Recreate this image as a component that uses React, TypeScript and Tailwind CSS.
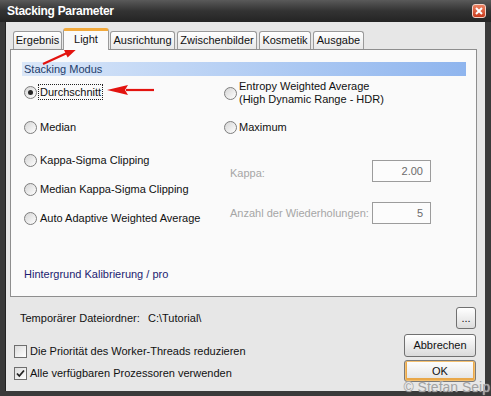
import React from "react";

const tabs = [
  { label: "Ergebnis", cls: "ml-[7px] w-[49px]" },
  { label: "Light", cls: "ml-[1px] w-[46px]", selected: true },
  { label: "Ausrichtung", cls: "ml-[1px] w-[65px]" },
  { label: "Zwischenbilder", cls: "ml-[2px] w-[80px]" },
  { label: "Kosmetik", cls: "ml-[2px] w-[52px]" },
  { label: "Ausgabe", cls: "ml-[2px] w-[51px]" },
];

function Radio({ checked = false }: { checked?: boolean }) {
  return (
    <span className="w-[13px] h-[13px] shrink-0 rounded-full border border-[#7d7d7d] bg-linear-to-br from-[#d5d5d5] to-white flex items-center justify-center">
      {checked && <span className="w-[5px] h-[5px] rounded-full bg-[#262626]" />}
    </span>
  );
}

function Checkbox({ checked = false }: { checked?: boolean }) {
  return (
    <span className="w-[13px] h-[13px] shrink-0 border border-[#6e6e6e] bg-linear-to-br from-[#dcdcdc] to-white flex items-center justify-center">
      {checked && (
        <svg width="11" height="11" viewBox="0 0 11 11">
          <path d="M2 5.5 L4.3 8 L9 2.5" fill="none" stroke="#222" strokeWidth="1.8" />
        </svg>
      )}
    </span>
  );
}

function NumberField({ value }: { value: string }) {
  return (
    <div className="w-[59px] h-[22px] border border-[#9c9c9c] bg-[#fcfcfc] flex items-center justify-end pr-[7px] text-[#6b6b6b]">
      {value}
    </div>
  );
}

export default function App() {
  return (
    <div className="relative w-[491px] h-[396px] overflow-hidden bg-[#3a3a3a] font-['Liberation_Sans',Arial,sans-serif] text-[11px] text-[#111]">
      {/* Titelleiste */}
      <div className="h-[22px] flex items-center justify-between pl-[7px] pr-[5px] bg-linear-to-b from-[#5a5a5a] via-[#333] to-[#242424]">
        <span className="text-white font-bold text-[12px] tracking-[-0.3px]">Stacking Parameter</span>
        <span className="w-[14px] h-[14px] rounded-[3px] border border-[#f3d3c8] bg-linear-to-b from-[#ec8262] to-[#c9381a] flex items-center justify-center">
          <svg width="8" height="8" viewBox="0 0 8 8">
            <path d="M1 1 L7 7 M7 1 L1 7" stroke="white" strokeWidth="2" />
          </svg>
        </span>
      </div>

      <div className="ml-[5px] mr-[6px] h-[369px] bg-[#e7e7e7] border-l border-[#222]">
        {/* Reiter */}
        <div className="h-[27px] flex items-end">
          {tabs.map((t) =>
            t.selected ? (
              <div
                key={t.label}
                className={`${t.cls} relative z-10 -mb-px h-[22px] border-x border-[#9a9a9a] border-t-[3px] border-t-[#f2a93b] rounded-t-[3px] bg-[#fafafa] flex items-center justify-center pb-[3px]`}
              >
                {t.label}
              </div>
            ) : (
              <div
                key={t.label}
                className={`${t.cls} h-[18px] border border-b-0 border-[#9a9a9a] rounded-t-[3px] bg-linear-to-b from-white to-[#e8e8e8] flex items-center justify-center`}
              >
                {t.label}
              </div>
            )
          )}
        </div>

        {/* Panel */}
        <div className="ml-[4px] w-[467px] h-[248px] border border-[#8e8e8e] bg-[#fafafa]">
          <div className="ml-[11px] mt-[12px] w-[444px] h-[14px] bg-linear-to-r from-[#dae7f8] to-[#8fb5ee] pl-[2px] flex items-center text-[#233d6b]">
            Stacking Modus
          </div>

          <div className="flex pl-[13px]">
            {/* linke Spalte */}
            <div className="w-[200px] flex flex-col">
              <div className="mt-[8px] h-[16px] flex items-center">
                <Radio checked />
                <span className="ml-[1px] px-[1px] border border-dotted border-[#222] leading-[14px]">Durchschnitt</span>
              </div>
              <div className="mt-[19px] h-[16px] flex items-center gap-[3px]">
                <Radio />
                <span>Median</span>
              </div>
              <div className="mt-[17px] h-[16px] flex items-center gap-[3px]">
                <Radio />
                <span>Kappa-Sigma Clipping</span>
              </div>
              <div className="mt-[13px] h-[16px] flex items-center gap-[3px]">
                <Radio />
                <span>Median Kappa-Sigma Clipping</span>
              </div>
              <div className="mt-[13px] h-[16px] flex items-center gap-[3px]">
                <Radio />
                <span>Auto Adaptive Weighted Average</span>
              </div>
              <div className="mt-[40px] h-[16px] flex items-center text-[#1c1c70]">
                Hintergrund Kalibrierung / pro
              </div>
            </div>

            {/* rechte Spalte */}
            <div className="w-[207px] flex flex-col">
              <div className="mt-[4px] h-[26px] flex items-center gap-[2px]">
                <Radio />
                <span className="leading-[13px]">
                  Entropy Weighted Average
                  <br />
                  (High Dynamic Range - HDR)
                </span>
              </div>
              <div className="mt-[13px] h-[16px] flex items-center gap-[2px]">
                <Radio />
                <span>Maximum</span>
              </div>
              <div className="mt-[25px] flex items-center justify-between pl-[6px] text-[#a6a6a6]">
                <span className="pt-[4px]">Kappa:</span>
                <NumberField value="2.00" />
              </div>
              <div className="mt-[20px] flex items-center justify-between pl-[6px] text-[#a6a6a6]">
                <span>Anzahl der Wiederholungen:</span>
                <NumberField value="5" />
              </div>
            </div>
          </div>
        </div>

        {/* Dateiordner */}
        <div className="mt-[10px] h-[22px] flex items-center pl-[14px] pr-[9px]">
          <span className="w-[128px]">Temporärer Dateiordner:</span>
          <span>{"C:\\Tutorial\\"}</span>
          <span className="ml-auto w-[20px] h-[22px] rounded-[3px] border border-[#707070] bg-linear-to-b from-white to-[#dcdcdc] flex items-end justify-center pb-[4px] leading-none">
            ...
          </span>
        </div>

        <div className="mt-[5px] flex justify-between pr-[9px]">
          <div className="pl-[8px] pt-[11px] flex flex-col gap-[9px]">
            <div className="h-[13px] flex items-center gap-[3px]">
              <Checkbox />
              <span>Die Priorität des Worker-Threads reduzieren</span>
            </div>
            <div className="h-[13px] flex items-center gap-[3px]">
              <Checkbox checked />
              <span>Alle verfügbaren Prozessoren verwenden</span>
            </div>
          </div>
          <div className="w-[72px] flex flex-col gap-[3px]">
            <div className="h-[23px] rounded-[3px] border border-[#707070] bg-linear-to-b from-white to-[#dadada] flex items-center justify-center">
              Abbrechen
            </div>
            <div className="h-[22px] rounded-[3px] border border-[#7a7a7a] bg-linear-to-b from-white to-[#e2e2e2] flex items-center justify-center shadow-[inset_0_0_0_1px_#f4c070,inset_0_-1px_0_2px_#e9a84a]">
              OK
            </div>
          </div>
        </div>
      </div>

      {/* Wasserzeichen */}
      <span className="absolute right-[1px] bottom-[1px] text-[14px] leading-[16px] text-[#a2a2a2] [text-shadow:0_0_1px_#e8e8e8]">© Stefan Seip</span>

      {/* rote Pfeile */}
      <svg className="absolute inset-0 pointer-events-none" width="491" height="396" viewBox="0 0 491 396">
        <line x1="43" y1="64" x2="67" y2="53" stroke="#e3130f" strokeWidth="2.2" />
        <polygon points="80,46 67.6,57.6 63.2,48.2" fill="#e3130f" />
        <line x1="126" y1="90" x2="154" y2="90" stroke="#e3130f" strokeWidth="2.2" />
        <polygon points="107,90 128,85 125,90 128,95" fill="#e3130f" />
      </svg>
    </div>
  );
}
